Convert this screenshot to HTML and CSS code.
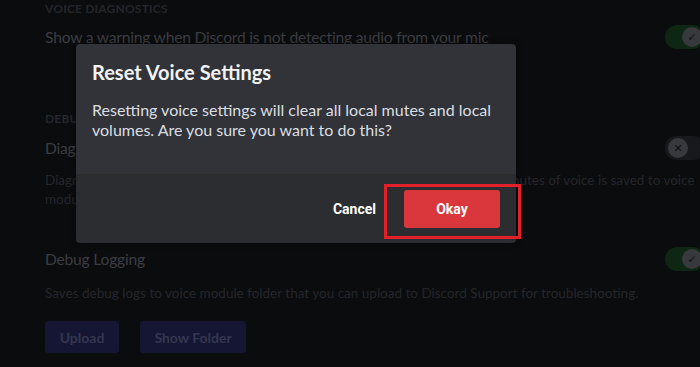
FILE: index.html
```html
<!DOCTYPE html>
<html lang="en">
<head>
    <meta charset="UTF-8">
    <title>Voice Settings</title>
    <link rel="stylesheet" href="styles.css">
</head>
<body>
    <main class="settings">
        <h5 class="section-title first">Voice Diagnostics</h5>
        <div class="row">
            <div class="row-title">Show a warning when Discord is not detecting audio from your mic</div>
            <div class="toggle on"><span class="knob">&#10003;</span></div>
        </div>

        <h5 class="section-title">Debugging</h5>
        <div class="row">
            <div class="row-title">Diagnostic Audio Recording</div>
            <div class="toggle off"><span class="knob">&#10005;</span></div>
        </div>
        <p class="row-note">Diagnostic audio recordings are used for analyzing audio issues. The last five minutes of voice is saved to voice<br>module folder.</p>

        <div class="row spaced">
            <div class="row-title">Debug Logging</div>
            <div class="toggle on"><span class="knob">&#10003;</span></div>
        </div>
        <p class="row-note loose">Saves debug logs to voice module folder that you can upload to Discord Support for troubleshooting.</p>

        <div class="actions">
            <button class="dim-btn">Upload</button>
            <button class="dim-btn wide">Show Folder</button>
        </div>
    </main>

    <div class="modal">
        <div class="modal-body">
            <h2 class="modal-title">Reset Voice Settings</h2>
            <p class="modal-text">Resetting voice settings will clear all local mutes and local volumes. Are you sure you want to do this?</p>
        </div>
        <div class="modal-footer">
            <button class="link-btn">Cancel</button>
            <div class="highlight">
                <button class="danger-btn">Okay</button>
            </div>
        </div>
    </div>
</body>
</html>
```

FILE: styles.css
```css
:root {
    --page-bg: #0b0c0e;
    --modal-bg: #313338;
    --footer-bg: #2b2d31;
    --text-normal: #dbdee1;
    --danger: #da373c;
    --marker: #e3202a;
}

* {
    margin: 0;
    padding: 0;
    box-sizing: border-box;
}

body {
    width: 700px;
    height: 367px;
    overflow: hidden;
    background-color: var(--page-bg);
    font-family: Lato, "Noto Sans", sans-serif;
    position: relative;
}

.settings {
    width: 660px;
    margin-left: 45px;
}

.section-title {
    font-size: 12px;
    font-weight: 700;
    text-transform: uppercase;
    letter-spacing: 0.2px;
    color: #25262a;
    line-height: 16px;
    margin-top: 62px;
    margin-bottom: 9px;
}

.section-title.first {
    margin-top: 1px;
    margin-bottom: 8px;
}

.row {
    display: flex;
    justify-content: space-between;
    align-items: center;
    height: 24px;
}

.row.spaced {
    margin-top: 38px;
}

.row-title {
    font-size: 15.6px;
    letter-spacing: -0.2px;
    color: #3c3d42;
    line-height: 20px;
}

.row-note {
    font-size: 13.5px;
    line-height: 19px;
    color: #25262a;
    margin-top: 11px;
    white-space: nowrap;
}

.row-note.loose {
    margin-top: 13px;
}

.toggle {
    width: 40px;
    height: 24px;
    border-radius: 12px;
    display: flex;
    align-items: center;
    justify-content: flex-end;
    padding: 2px 3px;
}

.toggle.on {
    background-color: #0e2714;
}

.toggle.off {
    background-color: #18191c;
    justify-content: flex-start;
}

.knob {
    width: 20px;
    height: 20px;
    border-radius: 50%;
    background-color: #37393c;
    color: #0f1012;
    font-size: 11px;
    font-weight: 700;
    display: flex;
    align-items: center;
    justify-content: center;
    font-family: "DejaVu Sans", sans-serif;
}

.actions {
    display: flex;
    gap: 21px;
    margin-top: 18px;
}

.dim-btn {
    height: 32px;
    width: 74px;
    border: none;
    border-radius: 3px;
    background-color: #141634;
    color: #35374f;
    font-family: Lato, "Noto Sans", sans-serif;
    font-size: 14px;
    font-weight: 700;
}

.dim-btn.wide {
    width: 106px;
}

/* dialog on top of the dimmed page */
.modal {
    position: absolute;
    left: 76px;
    top: 44px;
    width: 440px;
    border-radius: 4px;
    box-shadow: 0 0 6px rgba(0, 0, 0, 0.4);
}

.modal-body {
    background-color: var(--modal-bg);
    border-radius: 4px 4px 0 0;
    padding: 16px 16px 34px;
}

.modal-title {
    font-size: 20px;
    line-height: 24px;
    font-weight: 700;
    color: #f2f3f5;
}

.modal-text {
    margin-top: 16px;
    font-size: 16px;
    line-height: 20px;
    color: var(--text-normal);
}

.modal-footer {
    background-color: var(--footer-bg);
    border-radius: 0 0 4px 4px;
    padding: 0 16px;
    display: flex;
    justify-content: flex-end;
    align-items: center;
    height: 69px;
}

.link-btn {
    background: none;
    border: none;
    color: #fff;
    font-family: Roboto, "Liberation Sans", sans-serif;
    font-size: 14px;
    font-weight: 700;
    padding: 0 28px 0 0;
}

.highlight {
    position: relative;
}

.highlight::before {
    content: "";
    position: absolute;
    left: -20px;
    top: -6px;
    width: 131px;
    height: 49px;
    border: 3px solid var(--marker);
}

.danger-btn {
    width: 96px;
    height: 38px;
    border: none;
    border-radius: 3px;
    background-color: var(--danger);
    color: #fff;
    font-family: Roboto, "Liberation Sans", sans-serif;
    font-size: 14px;
    font-weight: 700;
    display: block;
}
```
